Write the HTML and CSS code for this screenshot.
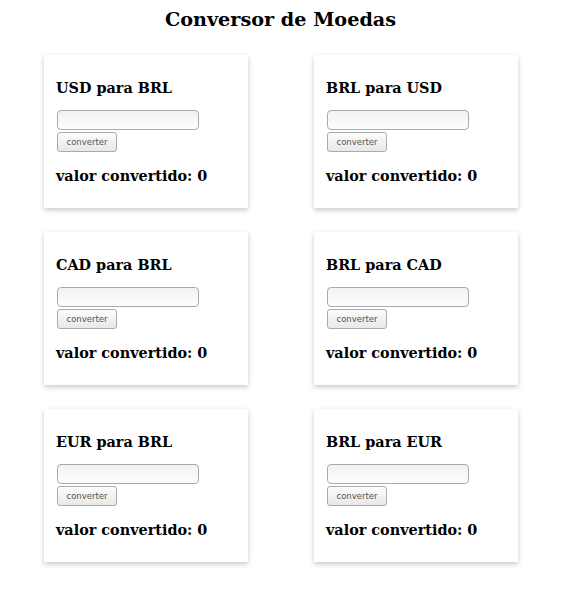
FILE: index.html
```html
<!DOCTYPE html>
<html lang="pt-BR">
<head>
<meta charset="utf-8">
<title>Conversor de Moedas</title>
<link rel="stylesheet" href="styles.css">
</head>
<body>
<h1 class="title">Conversor de Moedas</h1>
<div class="grid">
  <div class="card">
    <h3 class="card-title">USD para BRL</h3>
    <input class="field" type="text">
    <button class="btn">converter</button>
    <p class="result">valor convertido: 0</p>
  </div>
  <div class="card">
    <h3 class="card-title">BRL para USD</h3>
    <input class="field" type="text">
    <button class="btn">converter</button>
    <p class="result">valor convertido: 0</p>
  </div>
  <div class="card">
    <h3 class="card-title">CAD para BRL</h3>
    <input class="field" type="text">
    <button class="btn">converter</button>
    <p class="result">valor convertido: 0</p>
  </div>
  <div class="card">
    <h3 class="card-title">BRL para CAD</h3>
    <input class="field" type="text">
    <button class="btn">converter</button>
    <p class="result">valor convertido: 0</p>
  </div>
  <div class="card">
    <h3 class="card-title">EUR para BRL</h3>
    <input class="field" type="text">
    <button class="btn">converter</button>
    <p class="result">valor convertido: 0</p>
  </div>
  <div class="card">
    <h3 class="card-title">BRL para EUR</h3>
    <input class="field" type="text">
    <button class="btn">converter</button>
    <p class="result">valor convertido: 0</p>
  </div>
</div>
</body>
</html>
```
FILE: styles.css
```css
html, body {
  background: #fff;
}
body {
  margin: 0;
  font-family: "DejaVu Serif", serif;
  color: #000;
}
.title {
  margin: 0;
  padding: 8px 9px 0 0;
  text-align: center;
  font-size: 19.2px;
  line-height: 23px;
  font-weight: bold;
}
.grid {
  display: grid;
  grid-template-columns: 204px 204px;
  column-gap: 66px;
  row-gap: 24px;
  padding: 24px 0 20px 44px;
}
.card {
  display: flex;
  flex-direction: column;
  align-items: flex-start;
  height: 153px;
  box-sizing: border-box;
  padding: 24px 12px 0 12px;
  background: #fff;
  box-shadow: 0 2px 5px rgba(0, 0, 0, 0.22);
}
.card-title {
  margin: 0;
  font-size: 14.4px;
  line-height: 17px;
  font-weight: bold;
}
.field {
  margin: 14px 0 0 1px;
  width: 142px;
  height: 20px;
  box-sizing: border-box;
  border: 1px solid #a9a9a9;
  border-radius: 4px;
  background: linear-gradient(#f2f2f2, #fdfdfd);
  padding: 0 4px;
}
.btn {
  margin: 2px 0 0 1px;
  width: 60px;
  height: 20px;
  box-sizing: border-box;
  border: 1px solid #aaa;
  border-radius: 3px;
  background: linear-gradient(#fcfcfc, #e8e8e8);
  font-family: "DejaVu Sans", sans-serif;
  font-size: 8.5px;
  color: #555;
  padding: 0;
}
.result {
  margin: 15px 0 0 0;
  font-size: 14.4px;
  line-height: 17px;
  font-weight: bold;
}
```
